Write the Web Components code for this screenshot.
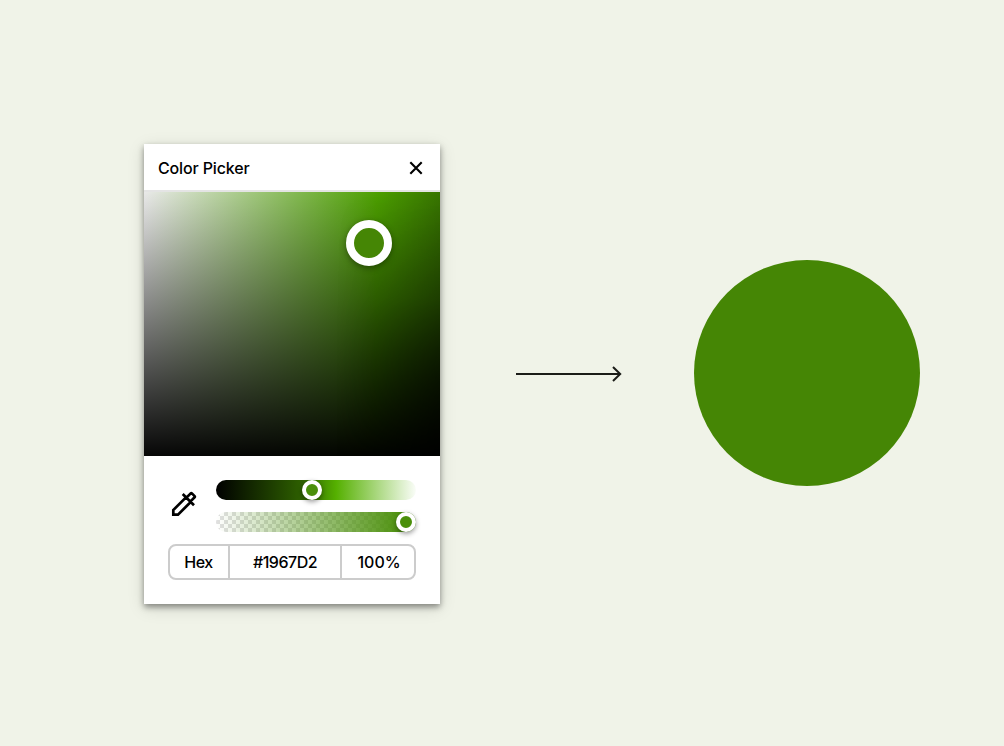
<!DOCTYPE html>
<html lang="en"><head><meta charset="utf-8"><title>Color Picker</title>
<style>html,body{margin:0;height:100%;background:#f0f3e8;overflow:hidden}</style></head>
<body><picker-stage></picker-stage>
<script>
const define = (name, html) => customElements.define(name, class extends HTMLElement {
  constructor() { super(); this.attachShadow({mode: 'open'}).innerHTML = html; }
});
define('picker-handle', `<style>
:host{display:block;box-sizing:border-box;width:20px;height:20px;border:4px solid #fff;border-radius:50%;background:#4a8f0a;box-shadow:0 2px 5px #0006}
</style>`);
define('picker-header', `<style>
:host{display:flex;box-sizing:border-box;height:48px;padding:2px 17px 0 14px;align-items:center;justify-content:space-between;border-bottom:2px solid #e4e4e4;font:500 16px/24px Inter,sans-serif;letter-spacing:-.15px}
svg{display:block;width:14px;height:14px}
</style><span><slot></slot></span><svg viewBox="0 0 14 14" fill="none" stroke="#000" stroke-width="2.1"><path d="M1.3 1.2l11.4 11.6M12.7 1.2L1.3 12.8"/></svg>`);
define('color-field', `<style>
:host{display:block;position:relative;height:264px;background:linear-gradient(#0000,#000000f8),linear-gradient(90deg,#e9e9e9,#4c9f00 79%,#387600)}
.dark{position:absolute;inset:0;background:linear-gradient(#0000,#0002 40%,#0007 70%,#000b);-webkit-mask-image:linear-gradient(90deg,#0000 65%,#000);mask-image:linear-gradient(90deg,#0000 65%,#000)}
picker-handle{position:absolute;left:202px;top:28px;width:46px;height:46px;border-width:8px;background:#458605;box-shadow:0 2px 6px #0006}
</style><div class="dark"></div><picker-handle></picker-handle>`);
define('picker-slider', `<style>
:host{display:block;position:relative;width:200px;height:20px}
.track{height:20px;border-radius:10px}
:host([kind=tone]) .track{background:linear-gradient(90deg,#000,#2e6000 43%,#55b000 60%,#fafdf8)}
:host([kind=alpha]) .track{background:linear-gradient(90deg,#4a8f0a00,#4a8f0a 95%),repeating-conic-gradient(#fff 0 25%,#e0e0e0 0 50%) 0 0/8px 8px}
picker-handle{position:absolute;top:0}
:host([kind=tone]) picker-handle{left:86px}
:host([kind=alpha]) picker-handle{left:180px}
</style><div class="track"></div><picker-handle></picker-handle>`);
define('color-value', `<style>
:host{display:grid;box-sizing:border-box;grid-template-columns:58px 112px 74px;height:36px;border:2px solid #ccc;border-radius:8px;font:500 16px/33px Inter,sans-serif;text-align:center}
::slotted(:not(:first-child)){border-left:2px solid #ccc}
::slotted(:first-child){letter-spacing:-.4px;padding-right:1px}
::slotted(:nth-child(2)){letter-spacing:-.5px}
::slotted(:last-child){padding-left:2px}
</style><slot></slot>`);
define('picker-panel', `<style>
:host{display:block;width:296px;height:460px;background:#fff;color:#000;box-shadow:0 3px 6px #0006,0 4px 16px #0002}
.body{padding:24px 24px 0}
.row{display:flex;height:52px;margin-bottom:12px}
.icon{width:32px;height:32px;margin:8px 16px 0 0;flex:none}
.sliders{display:flex;flex-direction:column;gap:12px}
</style><picker-header>Color Picker</picker-header><color-field></color-field>
<div class="body"><div class="row"><svg class="icon" viewBox="0 0 32 32" fill="none" stroke="#000" stroke-width="2.7"><path d="M5.3 26.7V22L18 9.3l4.7 4.7L10 26.7zM14.7 6l11.3 11.3M18.4 9.7l4.3-4.3q.6-.6 1.2 0l2.7 2.7q.6.6 0 1.2L22.3 13.6"/></svg>
<div class="sliders"><picker-slider kind="tone"></picker-slider><picker-slider kind="alpha"></picker-slider></div></div>
<color-value><span>Hex</span><span>#1967D2</span><span>100%</span></color-value></div>`);
define('flow-arrow', `<style>
:host,svg{display:block;width:106px;height:16px}
</style><svg viewBox="0 0 106 16" fill="none" stroke="#1b1c18" stroke-width="2"><path d="M0 8h104M97 1l7.2 7L97 15"/></svg>`);
define('color-swatch', `<style>
:host{display:block;width:226px;height:226px;border-radius:50%;background:#458605}
</style>`);
define('picker-stage', `<style>
:host{display:flex;box-sizing:border-box;width:1004px;height:746px;padding-left:144px;align-items:center;background:#f0f3e8}
picker-panel{margin-top:2px}
flow-arrow{margin:2px 72px 0 76px}
</style><picker-panel></picker-panel><flow-arrow></flow-arrow><color-swatch></color-swatch>`);
</script></body></html>
